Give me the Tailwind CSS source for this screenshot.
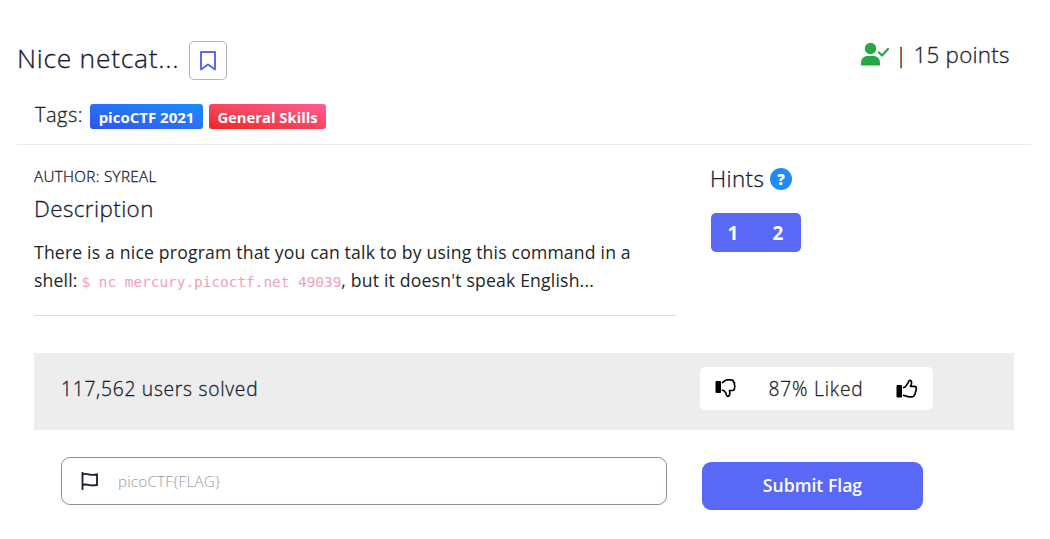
<!DOCTYPE html>
<html lang="en">
<head>
<meta charset="utf-8">
<title>Nice netcat...</title>
<script src="https://cdn.jsdelivr.net/npm/@tailwindcss/browser@4"></script>
</head>
<body class="w-[1050px] h-[539px] overflow-hidden bg-white font-['Open_Sans',sans-serif] text-[#212529]">
<header class="ml-[17px] mr-[19px] h-[145px] border-b border-[#ebebeb]">
  <div class="flex h-[80px] items-end justify-between">
    <div class="flex items-end">
      <h1 class="h-[39px] w-[172px] whitespace-nowrap text-[26.400px] leading-[35px] font-light tracking-[0.74px] text-[#161b33] [-webkit-text-stroke:0.3px]">Nice netcat...</h1>
      <button class="flex h-[39px] w-[38px] items-center justify-center rounded-[5px] border border-[#adb5bd]" aria-label="Bookmark">
        <svg width="18" height="22" viewBox="0 0 18 22" fill="none" stroke="#5a68f6" stroke-width="2" stroke-linejoin="round"><path d="M2 2h14v17.5l-7-5-7 5z"/></svg>
      </button>
    </div>
    <div class="mr-[21px] flex h-[42px] items-start">
      <svg class="mt-[4px] mr-[6px]" width="29" height="25" viewBox="0 0 29 25"><circle cx="10.5" cy="6.5" r="5.7" fill="#28a745"/><path d="M1 23v-2c0-4.500 3-7 7-7h5c4 0 7 2.500 7 7v2q0 .5-.5.5h-18Q1 23.500 1 23z" fill="#28a745"/><path d="M19 10.500l3 3 6-6.500" fill="none" stroke="#28a745" stroke-width="2.200" stroke-linecap="round" stroke-linejoin="round"/></svg>
      <span class="w-[115px] whitespace-nowrap text-[22.400px] leading-[34px] font-light tracking-[0.25px] [-webkit-text-stroke:0.3px]">| 15 points</span>
    </div>
  </div>
  <div class="ml-[18px] flex pt-[24px]">
    <span class="-mt-[3px] w-[55px] whitespace-nowrap text-[20px] leading-[28px] font-light tracking-[0.5px] [-webkit-text-stroke:0.3px]">Tags:</span>
    <span class="h-[25px] w-[113px] rounded-[3px] bg-linear-to-tr from-[#2f55ee] to-[#1b8cfb] text-center text-[15px] leading-[27px] font-bold whitespace-nowrap text-white">picoCTF 2021</span>
    <span class="ml-[6px] h-[25px] w-[117px] rounded-[3px] bg-linear-to-tr from-[#ee2416] to-[#ff5c93] text-center text-[14.800px] leading-[27px] font-bold whitespace-nowrap text-white">General Skills</span>
  </div>
</header>
<main class="ml-[34px] w-[980px]">
  <div class="flex h-[208px]">
    <section class="h-[171px] w-[642px] border-b border-[#dedede] pt-[20px]">
      <p class="text-[15.200px] leading-[22px] font-light tracking-[0.35px] text-[#161b33] [-webkit-text-stroke:0.3px]">AUTHOR: SYREAL</p>
      <h2 class="mt-[5px] text-[22.400px] leading-[34px] font-light tracking-[0.42px] text-[#161b33] [-webkit-text-stroke:0.3px]">Description</h2>
      <p class="mt-[12px] text-[17.600px] leading-[28px] tracking-[0.185px] whitespace-nowrap">There is a nice program that you can talk to by using this command in a<br>shell: <code class="-ml-px font-['DejaVu_Sans_Mono',monospace] text-[14.400px] tracking-[0px] text-[#f2a0b6]">$ nc mercury.picoctf.net 49039</code>, but it doesn't speak English...</p>
    </section>
    <aside class="ml-[34px] pt-[17px]">
      <div class="flex items-center"><h2 class="w-[60px] whitespace-nowrap text-[22.400px] leading-[34px] font-light tracking-[0.4px] text-[#161b33] [-webkit-text-stroke:0.3px]">Hints</h2>
        <span class="flex size-[22px] items-center justify-center rounded-full bg-[#1f8cf9] text-[15px] leading-none font-extrabold text-white">?</span></div>
      <div class="mt-[17px] ml-px flex h-[39px] w-[90px] rounded-[5px] bg-[#5a68f6] text-[19px] leading-[40px] font-bold text-white"><span class="w-[44px] text-center">1</span><span class="w-[46px] text-center">2</span></div>
    </aside>
  </div>
  <section class="flex h-[77px] bg-[#ededed] pl-[27px]">
    <span class="w-[639px] pt-[19px] text-[19.200px] leading-[34px] font-light tracking-[0.75px] text-[#161b33] [-webkit-text-stroke:0.3px]">117,562 users solved</span>
    <div class="mt-[14px] flex h-[43px] w-[233px] rounded-[5px] bg-white">
      <svg class="mt-[11px] ml-[15px]" width="22" height="20" viewBox="0 0 22 20"><path d="M1 3.500h4.500v11H1z" stroke="#000" stroke-linejoin="round"/><path d="M7.500 4.500c2-1 2.500-2.700 4.500-2.700h4c1.500 0 2.500.7 2.500 2.300c1 .6 1.300 1.500.8 2.700c.9 1 .9 2.300.2 3.200c.2 1.500-.7 2.500-2 2.500h-3c.6 1.700.5 5.800-1.600 5.800c-1.900 0-1.300-2.300-2.500-4c-.8-1.100-1.600-2.200-2.900-2.200" fill="none" stroke="#000" stroke-width="1.700" stroke-linecap="round" stroke-linejoin="round"/></svg>
      <span class="ml-[13px] w-[132px] pt-[5px] text-center text-[19.200px] leading-[34px] font-light tracking-[0.8px] whitespace-nowrap [-webkit-text-stroke:0.3px]">87% Liked</span>
      <svg class="mt-[12px] ml-[14px]" width="22" height="20" viewBox="0 0 22 20"><path d="M1 6.500h4.500v11.500H1z" stroke="#000" stroke-linejoin="round"/><path d="M7.500 8.500c2.500 0 3-3 4.500-4.500c.8-.8.4-2.700 1.800-2.700c2.300 0 2.200 3.500.7 6h4c1.500 0 2.300 1.500 1.600 2.800c.3 1.200.1 2.200-.7 3c.1 1.200-.2 2-1 2.700c-.1 1.300-.9 2-2.200 2h-2.500c-3.200 0-4.200-1.500-6.200-1.500" fill="none" stroke="#000" stroke-width="1.700" stroke-linecap="round" stroke-linejoin="round"/></svg>
    </div>
  </section>
  <form class="flex pt-[27px] pl-[27px]">
    <label class="flex h-[48px] w-[606px] items-center rounded-[9px] border border-[#8d8f9f]">
      <svg class="ml-[18px]" width="20" height="20" viewBox="0 0 20 20" fill="none" stroke="#161b33" stroke-width="1.800"><path d="M2.500 1v18M2.500 3.500c5-2.200 7 1.800 14.500 0v10.500c-7.500 1.800-9.500-2-14.500 0"/></svg>
      <input class="ml-[18px] w-[500px] text-[15.200px] font-light tracking-[0.2px] placeholder:text-[#98989e]" placeholder="picoCTF{FLAG}">
    </label>
    <button type="button" class="mt-[5px] ml-[35px] h-[48px] w-[221px] rounded-[9px] bg-[#5a68f6] pb-[2px] text-[17.600px] font-semibold text-white">Submit Flag</button>
  </form>
</main>
</body>
</html>
